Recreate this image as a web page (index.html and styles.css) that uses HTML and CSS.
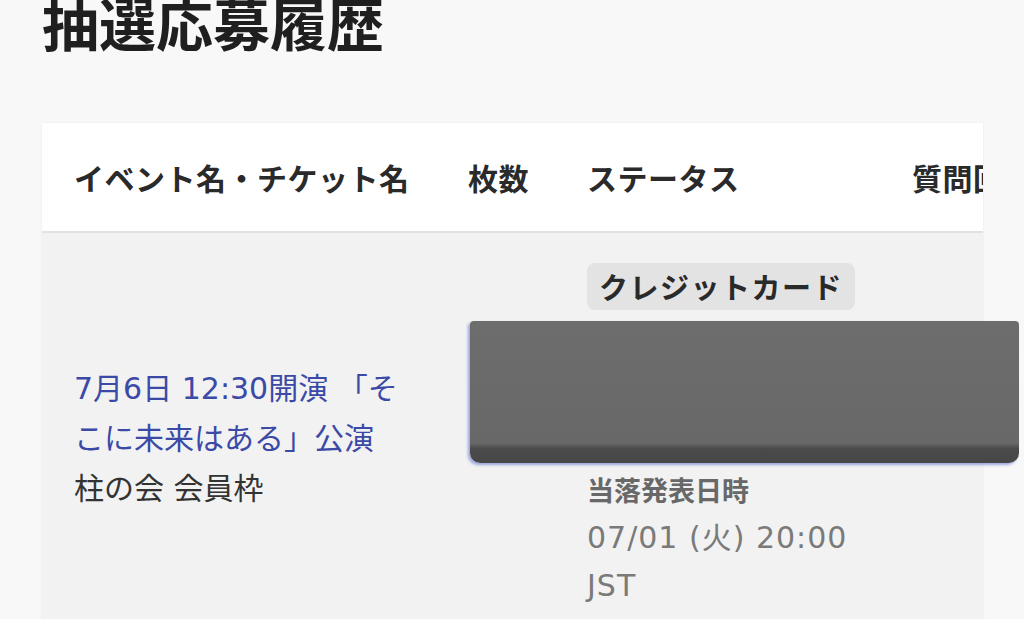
FILE: index.html
```html
<!DOCTYPE html>
<html lang="ja">
<head>
  <meta charset="UTF-8" />
  <meta name="viewport" content="width=device-width, initial-scale=1.0"/>
  <title>抽選応募履歴</title>
  <link rel="stylesheet" href="styles.css">
</head>
<body>
  <main class="page">
    <h1 class="page-title">抽選応募履歴</h1>

    <!-- History table -->
    <section class="history">
      <div class="row head">
        <div class="cell col-event">イベント名・チケット名</div>
        <div class="cell col-count">枚数</div>
        <div class="cell col-status">ステータス</div>
        <div class="cell col-question">質問回答</div>
      </div>

      <div class="row item">
        <div class="cell col-event">
          <a class="event-link" href="#">7月6日 12:30開演 「そこに未来はある」公演</a>
          <p class="ticket-name">柱の会 会員枠</p>
        </div>
        <div class="cell col-count">1</div>
        <div class="cell col-status">
          <span class="badge">クレジットカード</span>
          <div class="status-detail"></div>
          <p class="label">当落発表日時</p>
          <p class="date">07/01 (火) 20:00<br>JST</p>
        </div>
        <div class="cell col-question"></div>
      </div>
    </section>
  </main>

  <!-- masked area -->
  <div class="redaction"></div>
</body>
</html>
```

FILE: styles.css
```css
body {
  margin: 0;
  padding: 0;
  background: #f8f8f8;
  color: #333;
  font-family: "Noto Sans CJK JP", sans-serif;
  overflow: hidden;
}

.page {
  padding: 0 41px 0 42px;
}

.page-title {
  margin: -13px 0 0;
  font-size: 57px;
  line-height: 68px;
  font-weight: 700;
  color: #1f1f1f;
}

.history {
  margin-top: 68px;
  background: #f2f2f2;
  box-shadow: 0 0 2px rgba(0, 0, 0, 0.08);
  overflow: hidden;
}

.row {
  display: grid;
  grid-template-columns: 394px 119px 325px 300px;
  align-items: center;
}

.cell {
  padding-left: 32px;
  white-space: nowrap;
}

.head {
  height: 108px;
  background: #fff;
  border-bottom: 2px solid #e2e2e2;
  font-size: 30px;
  font-weight: 700;
  letter-spacing: 0.5px;
  color: #2a2a2a;
}

.item {
  font-family: "DejaVu Sans", "Noto Sans CJK JP", sans-serif;
  font-size: 30px;
  line-height: 50px;
}

.item .col-event {
  white-space: normal;
  padding-right: 32px;
}

.item .col-status {
  padding-top: 30px;
  padding-bottom: 34px;
}

.event-link {
  color: #3b4aa6;
  text-decoration: none;
}

.ticket-name {
  margin: 0;
  color: #333;
}

.badge {
  display: inline-block;
  background: #e3e3e3;
  border-radius: 8px;
  padding: 0 12px;
  font-family: "Noto Sans CJK JP", sans-serif;
  font-size: 29px;
  line-height: 47px;
  letter-spacing: 1.5px;
  font-weight: 700;
  color: #2a2a2a;
}

.status-detail {
  height: 152px;
}

.label {
  margin: 0;
  font-family: "Noto Sans CJK JP", sans-serif;
  font-size: 27px;
  font-weight: 700;
  line-height: 48px;
  color: #686868;
}

.date {
  margin: 0;
  font-size: 30px;
  line-height: 48px;
  letter-spacing: 1px;
  color: #7a7a7a;
}

.redaction {
  position: absolute;
  left: 470px;
  top: 321px;
  width: 549px;
  height: 142px;
  border-radius: 4px 4px 10px 10px;
  background: linear-gradient(#6d6d6d 0, #686868 86%, #4a4a4a 90%, #474747 100%);
  box-shadow: -2px 2px 3px rgba(80, 100, 210, 0.55);
}
```
